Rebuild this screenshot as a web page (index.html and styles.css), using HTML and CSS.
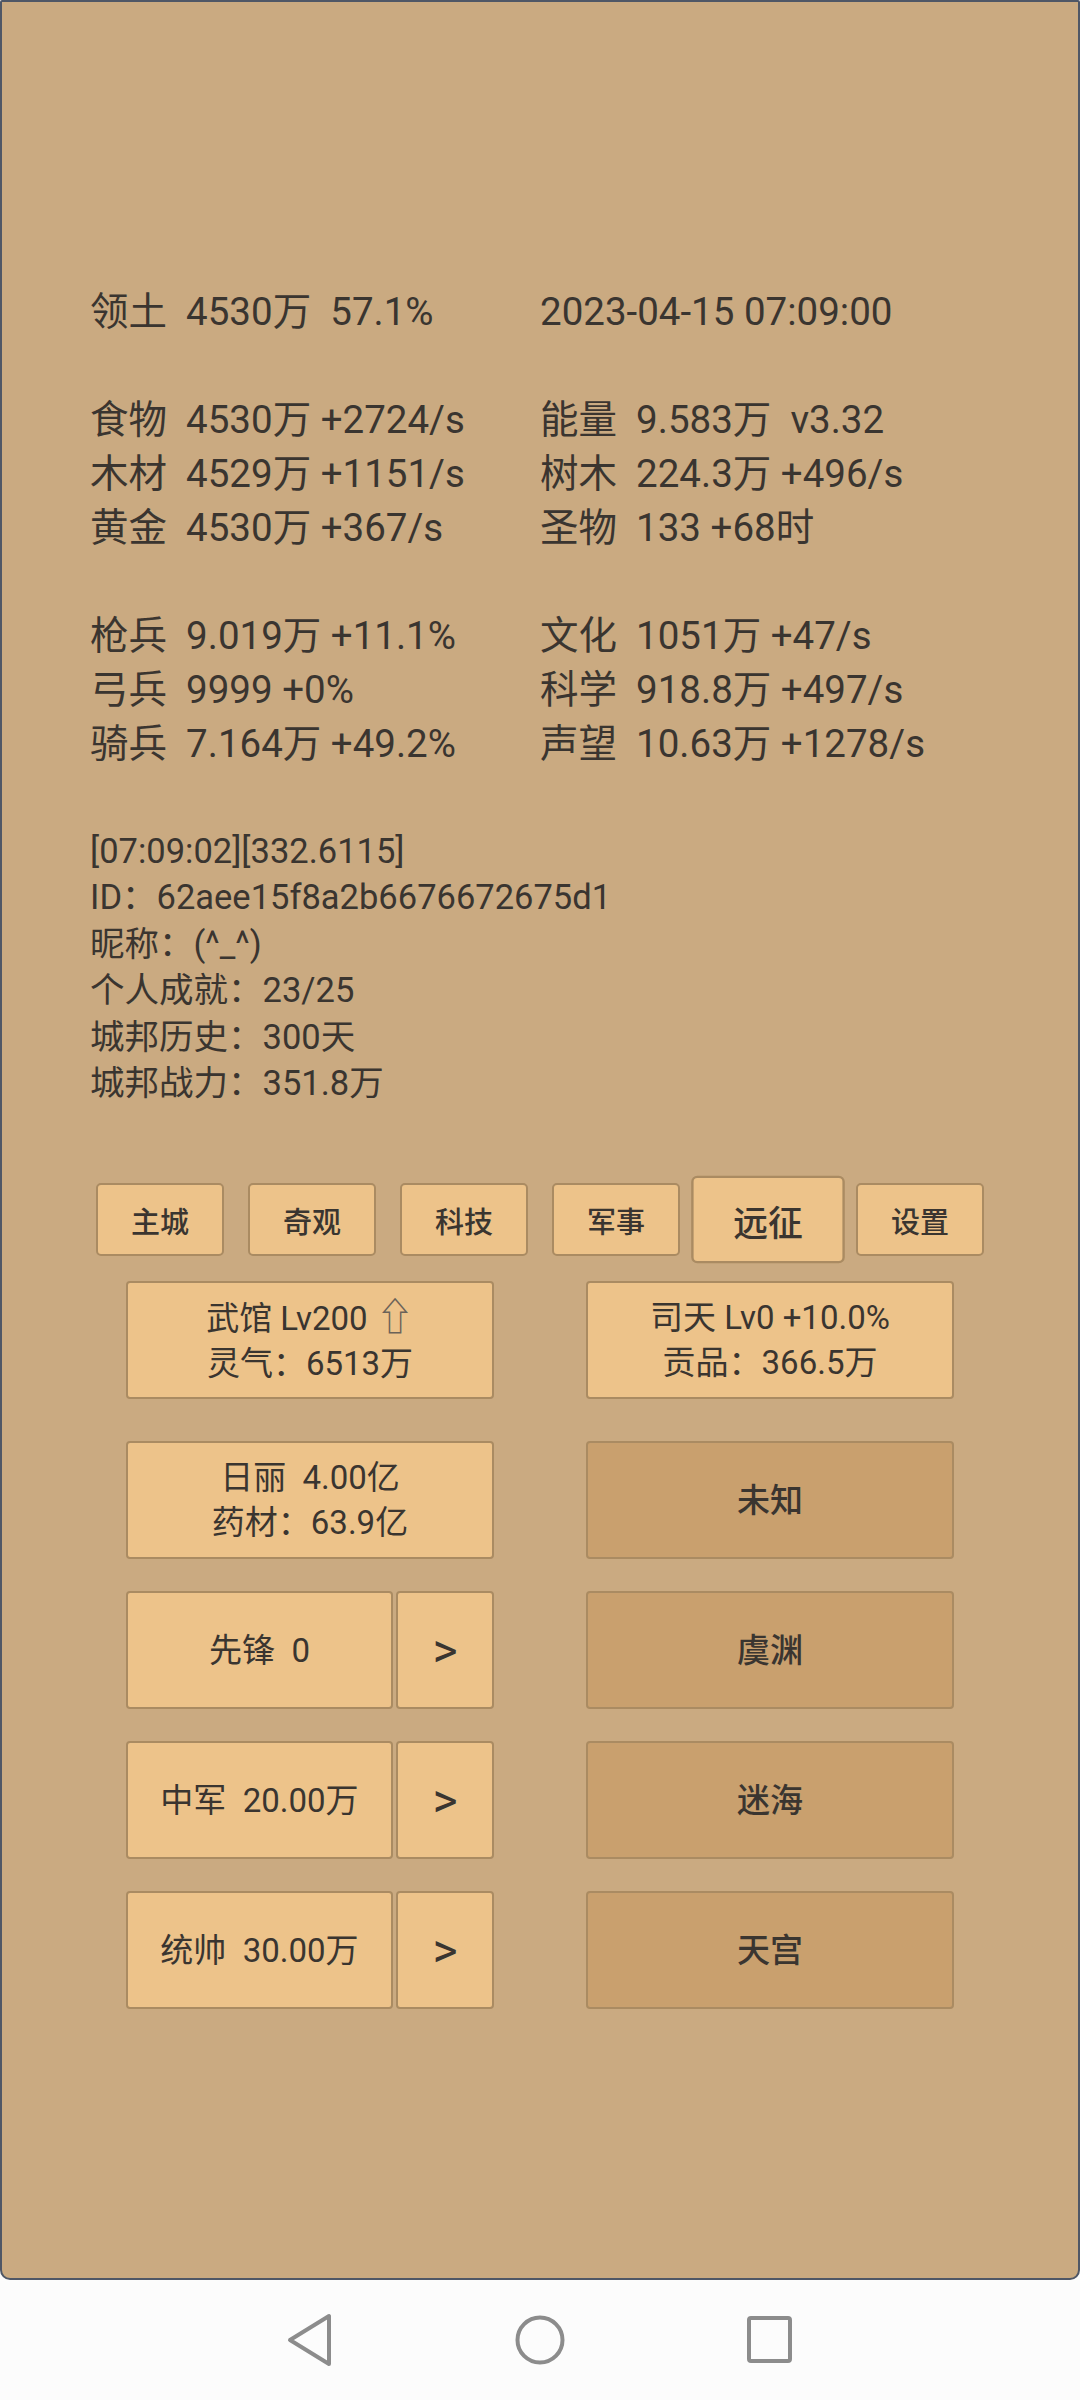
FILE: index.html
```html
<!DOCTYPE html>
<html lang="zh-CN">
<head>
    <meta charset="UTF-8">
    <meta name="viewport" content="width=device-width, initial-scale=1.0">
    <title>城邦</title>
    <link rel="stylesheet" href="styles.css">
</head>
<body>

    <div class="screen">
        <section class="stats">
            <span>领土  4530万  57.1%</span><span>2023-04-15 07:09:00</span>
            <span class="blank"></span><span class="blank"></span>
            <span>食物  4530万 +2724/s</span><span>能量  9.583万  v3.32</span>
            <span>木材  4529万 +1151/s</span><span>树木  224.3万 +496/s</span>
            <span>黄金  4530万 +367/s</span><span>圣物  133 +68时</span>
            <span class="blank"></span><span class="blank"></span>
            <span>枪兵  9.019万 +11.1%</span><span>文化  1051万 +47/s</span>
            <span>弓兵  9999 +0%</span><span>科学  918.8万 +497/s</span>
            <span>骑兵  7.164万 +49.2%</span><span>声望  10.63万 +1278/s</span>
        </section>

        <section class="info">
            <p>[07:09:02][332.6115]</p>
            <p>ID：62aee15f8a2b6676672675d1</p>
            <p>昵称：(^_^)</p>
            <p>个人成就：23/25</p>
            <p>城邦历史：300天</p>
            <p>城邦战力：351.8万</p>
        </section>

        <nav class="tabs">
            <button class="tab">主城</button>
            <button class="tab">奇观</button>
            <button class="tab">科技</button>
            <button class="tab">军事</button>
            <button class="tab active">远征</button>
            <button class="tab">设置</button>
        </nav>

        <div class="panel">
            <div class="panel-row first">
                <button class="card">
                    <span>武馆 Lv200 <span class="up">⇧</span></span>
                    <span>灵气：6513万</span>
                </button>
                <button class="card">
                    <span>司天 Lv0 +10.0%</span>
                    <span>贡品：366.5万</span>
                </button>
            </div>
            <div class="panel-row">
                <button class="card">
                    <span>日丽  4.00亿</span>
                    <span>药材：63.9亿</span>
                </button>
                <button class="card dark">未知</button>
            </div>
            <div class="panel-row">
                <div class="split">
                    <button class="card">先锋  0</button>
                    <button class="card arrow">&gt;</button>
                </div>
                <button class="card dark">虞渊</button>
            </div>
            <div class="panel-row">
                <div class="split">
                    <button class="card">中军  20.00万</button>
                    <button class="card arrow">&gt;</button>
                </div>
                <button class="card dark">迷海</button>
            </div>
            <div class="panel-row">
                <div class="split">
                    <button class="card">统帅  30.00万</button>
                    <button class="card arrow">&gt;</button>
                </div>
                <button class="card dark">天宫</button>
            </div>
        </div>
    </div>

    <div class="navbar">
        <svg width="48" height="56" viewBox="0 0 48 56">
            <path d="M43 4 L43 52 L4 28 Z" fill="none" stroke="#8c8c8c" stroke-width="4" stroke-linejoin="round"/>
        </svg>
        <svg width="52" height="52" viewBox="0 0 52 52">
            <circle cx="26" cy="26" r="22.5" fill="none" stroke="#8c8c8c" stroke-width="4"/>
        </svg>
        <svg width="48" height="50" viewBox="0 0 48 50">
            <rect x="3" y="3" width="41" height="43" rx="2" fill="none" stroke="#8c8c8c" stroke-width="4"/>
        </svg>
    </div>

</body>
</html>
```

FILE: styles.css
```css
:root {
    --bg-color: #caaa81;
    --frame-color: #4f5766;
    --font-color: #3a3530;
    --button-color: #edc38a;
    --button-dark: #c9a06e;
    --button-border: #aa8b62;
    --nav-color: #fcfcfc;
    --font-stack: Roboto, "Noto Sans CJK SC", "DejaVu Sans", sans-serif;
}

* {
    box-sizing: border-box;
    margin: 0;
    padding: 0;
}

body {
    width: 1080px;
    height: 2400px;
    background-color: var(--nav-color);
    font-family: var(--font-stack);
    color: var(--font-color);
    overflow: hidden;
}

.screen {
    height: 2280px;
    background-color: var(--bg-color);
    border: 2px solid var(--frame-color);
    border-radius: 2px 2px 10px 10px;
    padding-top: 283px;
}

/* Ressourcen-Übersicht */
.stats {
    display: grid;
    grid-template-columns: 450px 450px;
    padding-left: 88px;
    font-size: 38.5px;
    line-height: 54px;
}

.stats span {
    white-space: pre;
}

.stats .blank {
    height: 54px;
}

.info {
    margin-top: 57px;
    padding-left: 88px;
    font-size: 34.5px;
    line-height: 46.4px;
}

.info p {
    white-space: pre;
}

/* Tabs */
.tabs {
    display: flex;
    justify-content: center;
    gap: 24px;
    margin-top: 77px;
}

.tab {
    width: 128px;
    height: 73px;
    background-color: var(--button-color);
    border: 2px solid var(--button-border);
    border-radius: 5px;
    font-family: var(--font-stack);
    font-size: 29px;
    font-weight: 500;
    color: var(--font-color);
}

.tab.active {
    transform: scale(1.2);
}

/* Gebäude-Raster */
.panel {
    display: flex;
    flex-direction: column;
    gap: 32px;
    margin-top: 25px;
}

.panel-row {
    display: grid;
    grid-template-columns: 368px 368px;
    column-gap: 92px;
    justify-content: center;
    height: 118px;
}

.panel-row.first {
    margin-bottom: 10px;
}

.card {
    display: flex;
    flex-direction: column;
    justify-content: center;
    align-items: center;
    height: 118px;
    background-color: var(--button-color);
    border: 2px solid var(--button-border);
    border-radius: 4px;
    font-family: var(--font-stack);
    font-size: 33px;
    line-height: 45px;
    color: var(--font-color);
}

.card span {
    white-space: pre;
}

.card.dark {
    background-color: var(--button-dark);
    font-weight: 500;
}

.card .up {
    font-family: "DejaVu Sans", sans-serif;
    font-size: 38px;
    font-weight: 200;
    color: #6b6258;
}

.split {
    display: grid;
    grid-template-columns: 267px 98px;
    column-gap: 3px;
}

.split .card {
    white-space: pre;
}

.card.arrow {
    font-size: 48px;
}

/* Android-Navigationsleiste */
.navbar {
    height: 120px;
    display: flex;
    justify-content: center;
    align-items: center;
    gap: 180px;
}
```
